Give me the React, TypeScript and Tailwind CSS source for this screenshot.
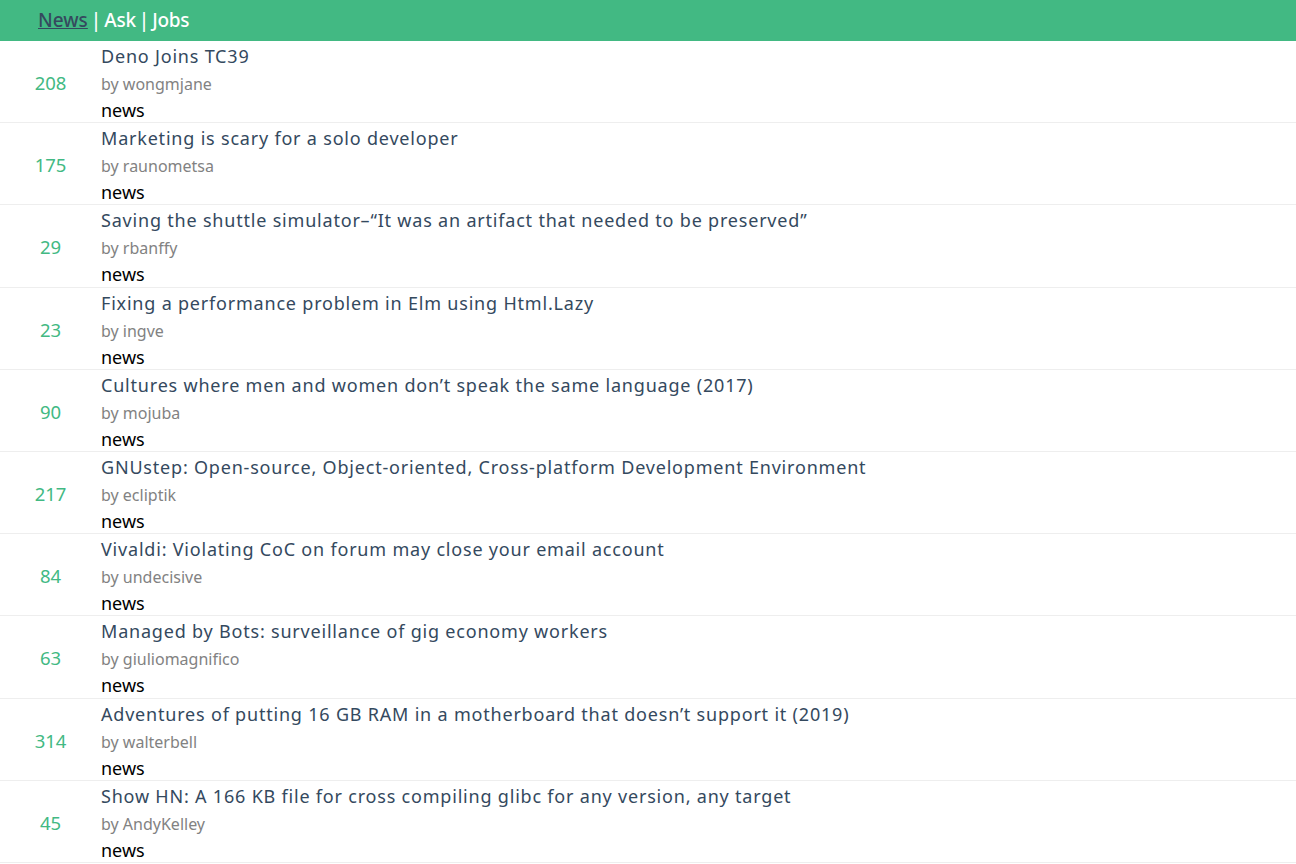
import React from 'react';

interface Story {
  score: number;
  title: string;
  by: string;
  type: string;
}

const stories: Story[] = [
  { score: 208, title: 'Deno Joins TC39', by: 'wongmjane', type: 'news' },
  { score: 175, title: 'Marketing is scary for a solo developer', by: 'raunometsa', type: 'news' },
  { score: 29, title: 'Saving the shuttle simulator–“It was an artifact that needed to be preserved”', by: 'rbanffy', type: 'news' },
  { score: 23, title: 'Fixing a performance problem in Elm using Html.Lazy', by: 'ingve', type: 'news' },
  { score: 90, title: 'Cultures where men and women don’t speak the same language (2017)', by: 'mojuba', type: 'news' },
  { score: 217, title: 'GNUstep: Open-source, Object-oriented, Cross-platform Development Environment', by: 'ecliptik', type: 'news' },
  { score: 84, title: 'Vivaldi: Violating CoC on forum may close your email account', by: 'undecisive', type: 'news' },
  { score: 63, title: 'Managed by Bots: surveillance of gig economy workers', by: 'giuliomagnifico', type: 'news' },
  { score: 314, title: 'Adventures of putting 16 GB RAM in a motherboard that doesn’t support it (2019)', by: 'walterbell', type: 'news' },
  { score: 45, title: 'Show HN: A 166 KB file for cross compiling glibc for any version, any target', by: 'AndyKelley', type: 'news' },
];

const App: React.FC = () => {
  return (
    <div className="min-h-screen bg-white font-['Noto_Sans',sans-serif]">
      {/* Header */}
      <header className="h-[41px] bg-[#42b983] flex items-center pl-[38px] text-[19px] text-white font-medium">
        <a href="#" className="text-[#35495e] underline">News</a>
        <span className="mx-[3px]">|</span>
        <a href="#" className="tracking-[-0.3px]">Ask</a>
        <span className="mx-[3px]">|</span>
        <a href="#" className="tracking-[-0.3px]">Jobs</a>
      </header>

      {/* Story list */}
      <ul>
        {stories.map((story, i) => (
          <li key={i} className="flex items-start border-b border-[#eeeeee] h-[82.2px] pt-[2px]">
            <div className="w-[101px] pt-[26px] leading-[27px] text-center text-[18.5px] text-[#42b983]">{story.score}</div>
            <div className="flex flex-col">
              <a href="#" className="h-[27px] leading-[27px] text-[18px] tracking-[0.8px] text-[#34495e]">{story.title}</a>
              <span className="h-[27px] leading-[29px] text-[16px] text-[#828282]">by {story.by}</span>
              <span className="h-[27px] leading-[27px] text-[18px] text-black">{story.type}</span>
            </div>
          </li>
        ))}
      </ul>
    </div>
  );
};

export default App;
